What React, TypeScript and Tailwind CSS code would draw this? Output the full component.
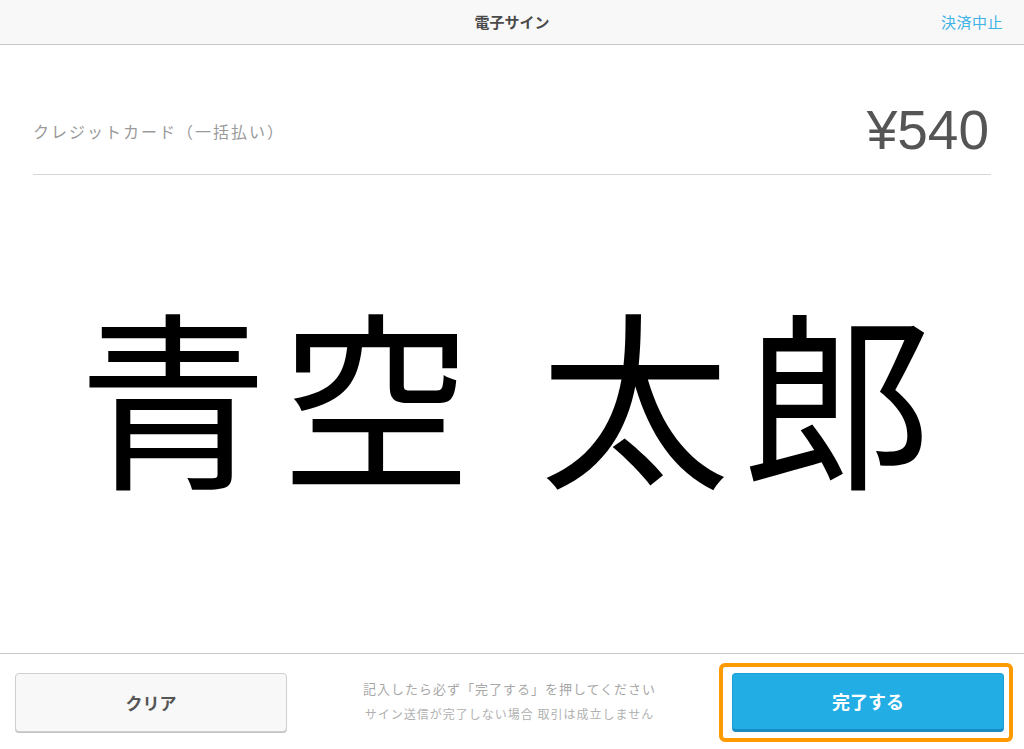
const jp = { fontFamily: '"Noto Sans CJK JP", "Noto Sans", sans-serif' };

export default function App() {
  return (
    <div className="h-[749px] w-[1024px] flex flex-col bg-white overflow-hidden" style={jp}>
      {/* ヘッダー */}
      <header className="h-[45px] shrink-0 flex items-center justify-center relative bg-[#f8f8f8] border-b border-[#c6c6c6]">
        <h1 className="text-[15px] font-bold text-[#4a4a4a]">電子サイン</h1>
        <button className="absolute right-[21px] top-1/2 -translate-y-1/2 text-[15px] tracking-[0.5px] text-[#3fb2e6]">
          決済中止
        </button>
      </header>

      {/* 支払い情報 */}
      <div className="mx-[33px] h-[130px] shrink-0 flex items-center justify-between border-b border-[#d6d6d6] pt-[42px]">
        <span className="text-[16px] tracking-[2px] text-[#9a9a9a]">クレジットカード（一括払い）</span>
        <span
          className="text-[55px] leading-none text-[#555555] mr-[2px]"
          style={{ fontFamily: '"Liberation Sans", Arial, sans-serif' }}
        >
          ¥540
        </span>
      </div>

      {/* サイン欄 */}
      <div className="flex-1 flex items-center justify-center pb-[44px]">
        <span className="text-[190px] leading-none tracking-[13px] text-black">青空 太郎</span>
      </div>

      {/* フッター */}
      <footer className="h-[96px] shrink-0 border-t border-[#c8c8c8] flex items-start pt-[19px] pl-[15px] pr-[20px]">
        <button className="w-[272px] h-[59px] rounded-[4px] bg-[#f8f8f8] border border-[#cfcfcf] shadow-[0_1px_0_#c4c4c4] text-[17px] font-bold text-[#555555]">
          クリア
        </button>
        <div className="flex-1 flex flex-col items-center pt-[6px]">
          <p className="text-[13px] tracking-[1px] text-[#a8a8a8]">記入したら必ず「完了する」を押してください</p>
          <p className="text-[12px] tracking-[1px] text-[#b0b0b0] mt-[6px]">サイン送信が完了しない場合 取引は成立しません</p>
        </div>
        <div className="relative">
          <div className="absolute -left-[13px] -top-[10px] -right-[9px] -bottom-[10px] border-4 border-[#ff9a00] rounded-[6px] pointer-events-none" />
          <button className="w-[272px] h-[59px] rounded-[4px] bg-[#22aee4] border border-[#1c9fd3] border-b-[3px] border-b-[#1a8ac0] text-[18px] font-bold text-white">
            完了する
          </button>
        </div>
      </footer>
    </div>
  );
}
